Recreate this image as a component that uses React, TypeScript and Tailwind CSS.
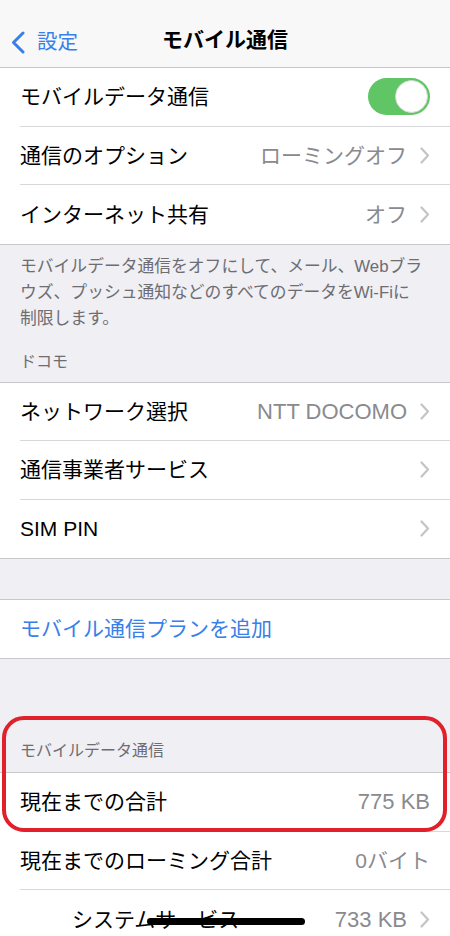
import React from 'react';

const font = { fontFamily: '"Liberation Sans", "Noto Sans CJK JP", sans-serif' };

function Chevron() {
    return (
        <svg width="10" height="17" viewBox="0 0 10 17" className="ml-[13px] shrink-0">
            <path d="M1.5 1.5 L8 8.5 L1.5 15.5" fill="none" stroke="#c4c4c7" strokeWidth="2.2" strokeLinecap="round" strokeLinejoin="round" />
        </svg>
    );
}

type RowProps = {
    label: string;
    value?: string;
    latin?: boolean;
    chevron?: boolean;
    last?: boolean;
    indent?: boolean;
    children?: React.ReactNode;
};

function Row({ label, value, latin, chevron, last, indent, children }: RowProps) {
    return (
        <div className="flex h-[58.5px] bg-white pl-[20px]">
            <div
                className={`flex flex-1 items-center pr-[20px] ${last ? '' : 'border-b border-[#d8d8dc]'} ${
                    indent ? 'pl-[52px]' : ''
                }`}
            >
                <span className="flex-1 text-[21px] text-black">{label}</span>
                {value && <span className={`${latin ? 'text-[22px]' : 'text-[21px]'} text-[#8a8a8e]`}>{value}</span>}
                {chevron && <Chevron />}
                {children}
            </div>
        </div>
    );
}

export default function App() {
    return (
        <div className="relative h-[936px] w-[450px] overflow-hidden bg-[#efeff4]" style={font}>
            {/* nav bar */}
            <div className="relative flex h-[68px] items-center justify-center border-b border-[#c8c7cc] bg-[#f8f8f8] pt-[12px]">
                <div className="absolute left-[11px] top-[31px] flex items-center gap-[12px]">
                    <svg width="14" height="23" viewBox="0 0 14 23">
                        <path d="M12 2 L2.5 11.5 L12 21" fill="none" stroke="#3880e8" strokeWidth="3" strokeLinecap="round" strokeLinejoin="round" />
                    </svg>
                    <span className="text-[20.5px] leading-none text-[#3880e8]">設定</span>
                </div>
                <span className="text-[21px] font-bold text-black">モバイル通信</span>
            </div>

            {/* group 1 */}
            <div className="border-b border-[#c8c7cc]">
                <Row label="モバイルデータ通信">
                    <div className="flex h-[37px] w-[62px] items-center justify-end rounded-full bg-[#5fc565] p-[2px]">
                        <div className="h-[33px] w-[33px] rounded-full border border-[#d6d6d6] bg-white" />
                    </div>
                </Row>
                <Row label="通信のオプション" value="ローミングオフ" chevron />
                <Row label="インターネット共有" value="オフ" chevron last />
            </div>

            <p className="px-[20px] pt-[9px] text-[16.8px] leading-[26px] text-[#6d6d72]">
                モバイルデータ通信をオフにして、メール、Webブラウズ、プッシュ通知などのすべてのデータをWi-Fiに
                <br />
                制限します。
            </p>

            <div className="px-[20px] pb-[9px] pt-[19px] text-[16px] leading-[22px] text-[#6d6d72]">ドコモ</div>

            {/* group 2 */}
            <div className="border-y border-[#c8c7cc]">
                <Row label="ネットワーク選択" value="NTT DOCOMO" latin chevron />
                <Row label="通信事業者サービス" chevron />
                <Row label="SIM PIN" chevron last />
            </div>

            {/* group 3 */}
            <div className="mt-[40px] border-y border-[#c8c7cc]">
                <div className="flex h-[58px] items-center bg-white pl-[20px]">
                    <span className="text-[21px] text-[#3880e8]">モバイル通信プランを追加</span>
                </div>
            </div>

            <div className="px-[20px] pb-[10px] pt-[81px] text-[16px] leading-[22px] text-[#6d6d72]">モバイルデータ通信</div>

            {/* group 4 */}
            <div className="border-t border-[#c8c7cc]">
                <Row label="現在までの合計" value="775 KB" latin />
                <Row label="現在までのローミング合計" value="0バイト" />
                <Row label="システムサービス" value="733 KB" latin chevron indent last />
            </div>

            {/* red highlight */}
            <div className="absolute left-[2px] top-[716px] h-[116px] w-[445px] rounded-[22px] border-[4px] border-[#e0202a]" />

            {/* home indicator */}
            <div className="absolute left-[147px] top-[918px] h-[7px] w-[158px] rounded-full bg-black" />
        </div>
    );
}
